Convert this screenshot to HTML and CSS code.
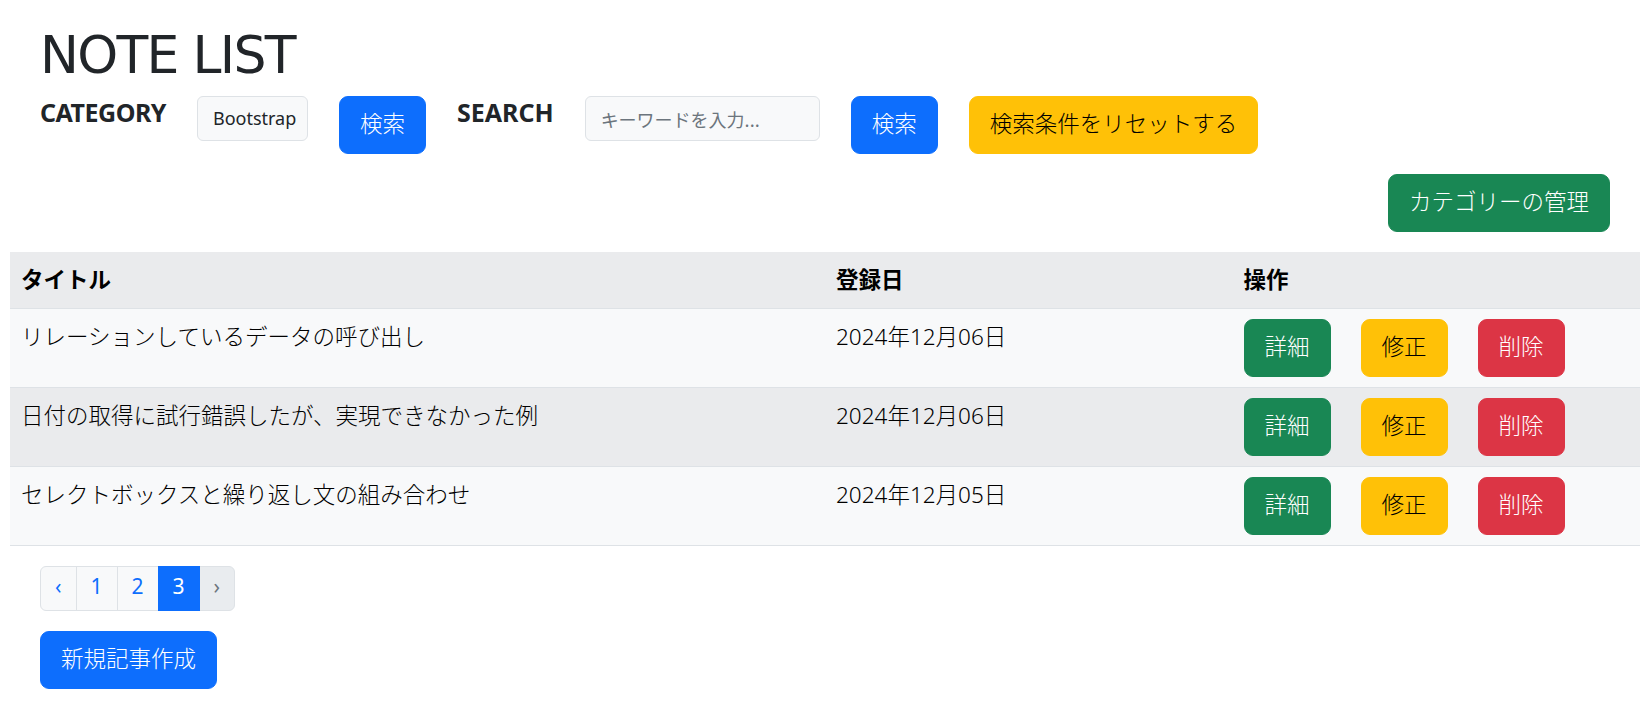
FILE: index.html
```html
<!DOCTYPE html>
<html lang="ja">
<head>
<meta charset="utf-8">
<title>NOTE LIST</title>
<link rel="stylesheet" href="styles.css">
</head>
<body>
<div class="page">
  <header class="top">
    <h1 class="title">NOTE LIST</h1>
    <form class="search-row">
      <span class="label label-category">CATEGORY</span>
      <div class="select">Bootstrap</div>
      <button type="button" class="btn btn-primary">検索</button>
      <span class="label label-search">SEARCH</span>
      <input class="input" type="text" placeholder="キーワードを入力...">
      <button type="button" class="btn btn-primary">検索</button>
      <button type="button" class="btn btn-warning">検索条件をリセットする</button>
    </form>
    <div class="manage-row">
      <button type="button" class="btn btn-success">カテゴリーの管理</button>
    </div>
  </header>

  <table class="notes">
    <colgroup>
      <col class="col-title">
      <col class="col-date">
      <col class="col-ops">
    </colgroup>
    <thead>
      <tr><th>タイトル</th><th>登録日</th><th>操作</th></tr>
    </thead>
    <tbody>
      <tr class="row-light">
        <td>リレーションしているデータの呼び出し</td>
        <td>2024年12月06日</td>
        <td><div class="ops"><button type="button" class="btn btn-success">詳細</button><button type="button" class="btn btn-warning">修正</button><button type="button" class="btn btn-danger">削除</button></div></td>
      </tr>
      <tr class="row-gray">
        <td>日付の取得に試行錯誤したが、実現できなかった例</td>
        <td>2024年12月06日</td>
        <td><div class="ops"><button type="button" class="btn btn-success">詳細</button><button type="button" class="btn btn-warning">修正</button><button type="button" class="btn btn-danger">削除</button></div></td>
      </tr>
      <tr class="row-light">
        <td>セレクトボックスと繰り返し文の組み合わせ</td>
        <td>2024年12月05日</td>
        <td><div class="ops"><button type="button" class="btn btn-success">詳細</button><button type="button" class="btn btn-warning">修正</button><button type="button" class="btn btn-danger">削除</button></div></td>
      </tr>
    </tbody>
  </table>

  <nav class="pager">
    <a class="page-item page-first">‹</a>
    <a class="page-item">1</a>
    <a class="page-item">2</a>
    <a class="page-item active">3</a>
    <a class="page-item page-last disabled">›</a>
  </nav>

  <div class="footer">
    <button type="button" class="btn btn-primary">新規記事作成</button>
  </div>
</div>
</body>
</html>
```

FILE: styles.css
```css
* { box-sizing: border-box; }

html, body {
  margin: 0;
  padding: 0;
  background: #ffffff;
}

body {
  font-family: "Noto Sans", "Noto Sans CJK JP", sans-serif;
  color: #212529;
  font-size: 22.5px;
  font-weight: 300;
}

.page {
  width: 1648px;
}

.top {
  padding: 25px 38px 0 40px;
}

.title {
  margin: 0 0 11px;
  font-family: "DejaVu Sans", sans-serif;
  font-weight: normal;
  font-size: 52px;
  line-height: 60px;
  letter-spacing: -1.7px;
  color: #212529;
}

.search-row {
  display: flex;
  align-items: flex-start;
  gap: 31px;
  margin: 0;
  height: 58px;
}

.label {
  font-family: "Noto Sans", sans-serif;
  font-weight: 700;
  font-size: 25px;
  line-height: 32px;
  color: #212529;
  white-space: nowrap;
}

.label-category {
  letter-spacing: -0.5px;
}

.select {
  width: 111px;
  height: 45px;
  padding: 8px 15px;
  font-size: 18px;
  font-weight: 400;
  line-height: 27px;
  background: #f8f9fa;
  border: 1px solid #dee2e6;
  border-radius: 6px;
  color: #212529;
  white-space: nowrap;
}

.input {
  width: 235px;
  height: 45px;
  padding: 8px 15px;
  font-family: "Noto Sans CJK JP", sans-serif;
  font-size: 18px;
  font-weight: 400;
  line-height: 27px;
  background: #f8f9fa;
  border: 1px solid #dee2e6;
  border-radius: 6px;
  color: #212529;
  outline: none;
}

.input::placeholder {
  color: #6c757d;
}

.btn {
  display: inline-block;
  font-family: "Noto Sans", "Noto Sans CJK JP", sans-serif;
  font-size: 22.5px;
  font-weight: 300;
  line-height: 36px;
  padding: 9px 20px 11px;
  border: 1px solid transparent;
  border-radius: 9px;
  white-space: nowrap;
  cursor: pointer;
}

.btn-primary { background: #0d6efd; border-color: #0d6efd; color: #ffffff; }
.btn-success { background: #198754; border-color: #198754; color: #ffffff; }
.btn-warning { background: #ffc107; border-color: #ffc107; color: #000000; }
.btn-danger  { background: #dc3545; border-color: #dc3545; color: #ffffff; }

.manage-row {
  display: flex;
  justify-content: flex-end;
  margin-top: 20px;
}

.notes {
  width: 1630px;
  margin: 20px 8px 0 10px;
  border-collapse: collapse;
  table-layout: fixed;
  color: #000000;
}

.col-title { width: 50%; }
.col-date { width: 25%; }
.col-ops { width: 25%; }

.notes th,
.notes td {
  text-align: left;
  vertical-align: top;
  padding: 10px 11px;
  border-bottom: 1px solid #dee2e6;
  font-size: 22.5px;
  line-height: 36px;
  white-space: nowrap;
}

.notes thead th {
  background: #eaebed;
  font-weight: 700;
}

.notes .row-light td { background: #f8f9fa; }
.notes .row-gray td { background: #eaebed; }

.notes td .ops {
  display: flex;
  gap: 30px;
}

.pager {
  display: flex;
  margin: 20px 0 0 40px;
}

.page-item {
  display: block;
  font-size: 21px;
  font-weight: 400;
  line-height: 33px;
  padding: 3px 14px 7px;
  border: 1px solid #dee2e6;
  background: #f8f9fa;
  color: #0d6efd;
  margin-left: -1px;
  text-decoration: none;
}

.page-first {
  margin-left: 0;
  border-radius: 6px 0 0 6px;
}

.page-last {
  border-radius: 0 6px 6px 0;
}

.page-item.active {
  background: #0d6efd;
  border-color: #0d6efd;
  color: #ffffff;
  position: relative;
}

.page-item.disabled {
  background: #e9ecef;
  color: #6c757d;
}

.footer {
  margin: 20px 0 0 40px;
}
```
